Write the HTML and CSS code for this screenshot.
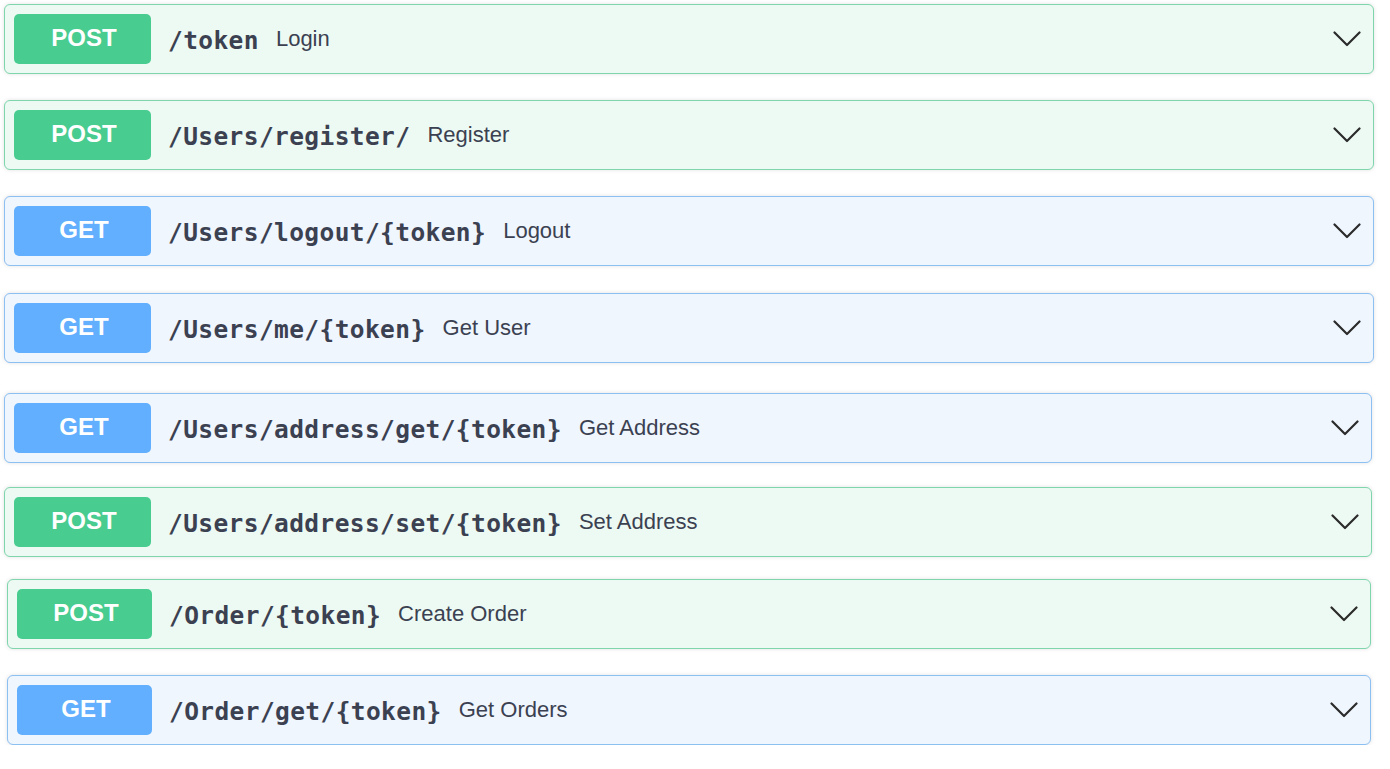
FILE: index.html
```html
<!DOCTYPE html>
<html lang="en">
<head>
<meta charset="utf-8">
<title>API operations</title>
<link rel="stylesheet" href="styles.css">
</head>
<body>
<div class="ops">
  <div class="op op--post">
    <span class="op__method">POST</span>
    <span class="op__path">/token</span>
    <span class="op__desc">Login</span>
    <svg class="op__arrow" viewBox="0 0 28 16" width="28" height="16"><polyline points="1.5,1.5 14,14 26.5,1.5"/></svg>
  </div>
  <div class="op op--post">
    <span class="op__method">POST</span>
    <span class="op__path">/Users/register/</span>
    <span class="op__desc">Register</span>
    <svg class="op__arrow" viewBox="0 0 28 16" width="28" height="16"><polyline points="1.5,1.5 14,14 26.5,1.5"/></svg>
  </div>
  <div class="op op--get">
    <span class="op__method">GET</span>
    <span class="op__path">/Users/logout/{token}</span>
    <span class="op__desc">Logout</span>
    <svg class="op__arrow" viewBox="0 0 28 16" width="28" height="16"><polyline points="1.5,1.5 14,14 26.5,1.5"/></svg>
  </div>
  <div class="op op--get op--gap27">
    <span class="op__method">GET</span>
    <span class="op__path">/Users/me/{token}</span>
    <span class="op__desc">Get User</span>
    <svg class="op__arrow" viewBox="0 0 28 16" width="28" height="16"><polyline points="1.5,1.5 14,14 26.5,1.5"/></svg>
  </div>
  <div class="op op--get op--gap30 op--narrow">
    <span class="op__method">GET</span>
    <span class="op__path">/Users/address/get/{token}</span>
    <span class="op__desc">Get Address</span>
    <svg class="op__arrow" viewBox="0 0 28 16" width="28" height="16"><polyline points="1.5,1.5 14,14 26.5,1.5"/></svg>
  </div>
  <div class="op op--post op--gap24 op--narrow">
    <span class="op__method">POST</span>
    <span class="op__path">/Users/address/set/{token}</span>
    <span class="op__desc">Set Address</span>
    <svg class="op__arrow" viewBox="0 0 28 16" width="28" height="16"><polyline points="1.5,1.5 14,14 26.5,1.5"/></svg>
  </div>
  <div class="op op--post op--gap22 op--inset">
    <span class="op__method">POST</span>
    <span class="op__path">/Order/{token}</span>
    <span class="op__desc">Create Order</span>
    <svg class="op__arrow" viewBox="0 0 28 16" width="28" height="16"><polyline points="1.5,1.5 14,14 26.5,1.5"/></svg>
  </div>
  <div class="op op--get op--inset">
    <span class="op__method">GET</span>
    <span class="op__path">/Order/get/{token}</span>
    <span class="op__desc">Get Orders</span>
    <svg class="op__arrow" viewBox="0 0 28 16" width="28" height="16"><polyline points="1.5,1.5 14,14 26.5,1.5"/></svg>
  </div>
</div>
</body>
</html>
```

FILE: styles.css
```css
html, body {
  margin: 0;
  padding: 0;
  background: #ffffff;
}

.ops {
  display: flex;
  flex-direction: column;
  padding-top: 4px;
}

.op {
  box-sizing: border-box;
  height: 70px;
  margin: 26px 16px 0 4px;
  display: flex;
  align-items: center;
  padding: 0 12px 0 9px;
  border: 1px solid;
  border-radius: 6px;
  box-shadow: 0 0 4px rgba(0, 0, 0, 0.12);
}

.op:first-child {
  margin-top: 0;
}

.op--gap27 { margin-top: 27px; }
.op--gap30 { margin-top: 30px; }
.op--gap24 { margin-top: 24px; }
.op--gap22 { margin-top: 22px; }

.op--narrow {
  margin-right: 18px;
}

.op--inset {
  margin-left: 7px;
  margin-right: 19px;
}

.op--inset .op__method {
  width: 135px;
}

.op--post {
  background: #edfaf3;
  border-color: #7fd6ad;
}

.op--get {
  background: #eff6fe;
  border-color: #8cbff2;
}

.op__method {
  flex: none;
  width: 137px;
  height: 50px;
  border-radius: 5px;
  display: flex;
  align-items: center;
  justify-content: center;
  color: #ffffff;
  font-family: "Liberation Sans", Arial, sans-serif;
  font-weight: 700;
  font-size: 24px;
  padding: 0 0 2px 3px;
  box-sizing: border-box;
}

.op--post .op__method { background: #49cc90; }
.op--get .op__method { background: #61affe; }

.op__path {
  flex: none;
  padding: 2px 17px 0 17px;
  font-family: "DejaVu Sans Mono", "Liberation Mono", monospace;
  font-weight: 700;
  font-size: 24.5px;
  letter-spacing: 0.4px;
  color: #3b4151;
}

.op__desc {
  flex: 1 1 auto;
  font-family: "Liberation Sans", Arial, sans-serif;
  font-size: 22px;
  color: #3b4151;
}

.op__arrow {
  flex: none;
  fill: none;
  stroke: #2b2b2b;
  stroke-width: 2.2;
  stroke-linecap: round;
  stroke-linejoin: round;
}
```
